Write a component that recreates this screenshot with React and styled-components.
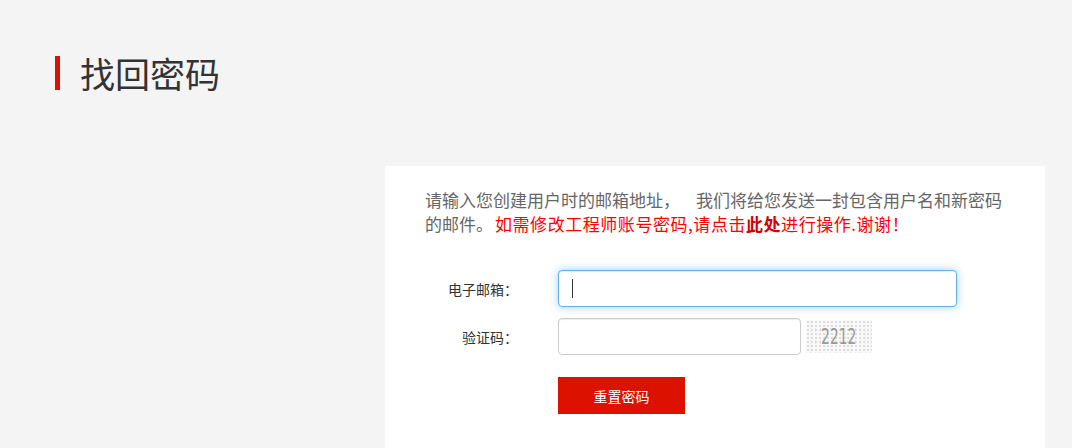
import styled, { createGlobalStyle } from "styled-components";

const GlobalStyle = createGlobalStyle`
  html, body {
    margin: 0;
    padding: 0;
    background: #f4f4f4;
    font-family: "Noto Sans CJK SC", "Noto Sans", "Liberation Sans", sans-serif;
  }
  * { box-sizing: border-box; }
`;

function App() {
    return (
        <Page>
            <GlobalStyle />
            <Header>
                <Title>找回密码</Title>
            </Header>
            <Card>
                <Intro>
                    请输入您创建用户时的邮箱地址，<Gap />我们将给您发送一封包含用户名和新密码<br />
                    的邮件。
                    <Warn>
                        如需修改工程师账号密码,请点击<Strong>此处</Strong>进行操作.谢谢！
                    </Warn>
                </Intro>
                <Form>
                    <Row>
                        <Label>电子邮箱：</Label>
                        <Input $focus $width={399} />
                    </Row>
                    <Row>
                        <Label>验证码：</Label>
                        <Captcha>
                            <Input $width={243} />
                            <CaptchaImage>
                                <span>2212</span>
                            </CaptchaImage>
                        </Captcha>
                    </Row>
                    <Row $top={22}>
                        <span />
                        <Button>重置密码</Button>
                    </Row>
                </Form>
            </Card>
        </Page>
    );
}

const Page = styled.div`
  min-height: 448px;
  overflow: hidden;
`;

const Header = styled.div`
  padding: 56px 0 0 55px;
  height: 166px;
`;

const Title = styled.h1`
  margin: 0;
  border-left: 5px solid #dd1100;
  padding-left: 20px;
  height: 34px;
  display: flex;
  align-items: center;
  font-size: 35px;
  font-weight: 400;
  color: #333;
  line-height: 34px;
`;

const Card = styled.div`
  margin-left: 385px;
  width: 660px;
  height: 300px;
  background: #fff;
  padding: 22px 40px 0 40px;
`;

const Intro = styled.p`
  margin: 0;
  font-size: 17px;
  line-height: 24px;
  color: #666;
  white-space: nowrap;
  text-spacing-trim: space-all;
`;

const Gap = styled.span`
  display: inline-block;
  width: 16px;
`;

const Warn = styled.span`
  color: #ff0000;
  letter-spacing: 0.55px;
  margin-left: 2px;
`;

const Strong = styled.b`
  color: #d40000;
  font-weight: 700;
`;

const Form = styled.div`
  margin-top: 34px;
  display: flex;
  flex-direction: column;
  gap: 11px;
`;

const Row = styled.div`
  display: grid;
  grid-template-columns: 93px 1fr;
  column-gap: 40px;
  align-items: center;
  margin-top: ${(p) => (p.$top ? p.$top - 11 : 0)}px;
`;

const Label = styled.label`
  text-align: right;
  font-size: 14px;
  color: #333;
  white-space: nowrap;
`;

const Input = styled.div`
  width: ${(p) => p.$width}px;
  height: 37px;
  border: 1px solid ${(p) => (p.$focus ? "#66afe9" : "#cccccc")};
  border-radius: 4px;
  background: #fff;
  box-shadow: ${(p) =>
        p.$focus
            ? "inset 0 1px 1px rgba(0,0,0,.075), 0 0 8px rgba(102,175,233,.6)"
            : "inset 0 1px 1px rgba(0,0,0,.075)"};
  position: relative;

  &::after {
    content: "";
    display: ${(p) => (p.$focus ? "block" : "none")};
    position: absolute;
    left: 13px;
    top: 8px;
    width: 1px;
    height: 19px;
    background: #333;
  }
`;

const Captcha = styled.div`
  display: flex;
  align-items: center;
  gap: 5px;
`;

const CaptchaImage = styled.div`
  width: 66px;
  height: 33px;
  background-color: #f9f9f9;
  background-image: radial-gradient(#dcdcdc 0.7px, transparent 1px),
    radial-gradient(#e6e6e6 0.7px, transparent 1px);
  background-size: 4px 4px, 5px 3px;
  background-position: 0 0, 2px 1px;
  display: flex;
  align-items: center;
  justify-content: center;

  span {
    font-family: "DejaVu Sans", sans-serif;
    font-size: 21px;
    color: #9a9a9a;
    transform: scaleX(0.66);
  }
`;

const Button = styled.button`
  width: 127px;
  height: 37px;
  border: none;
  border-radius: 0;
  background: #dd1100;
  color: #fff;
  font-family: "Noto Sans CJK SC", sans-serif;
  font-size: 14px;
  cursor: pointer;
`;

export default App;
